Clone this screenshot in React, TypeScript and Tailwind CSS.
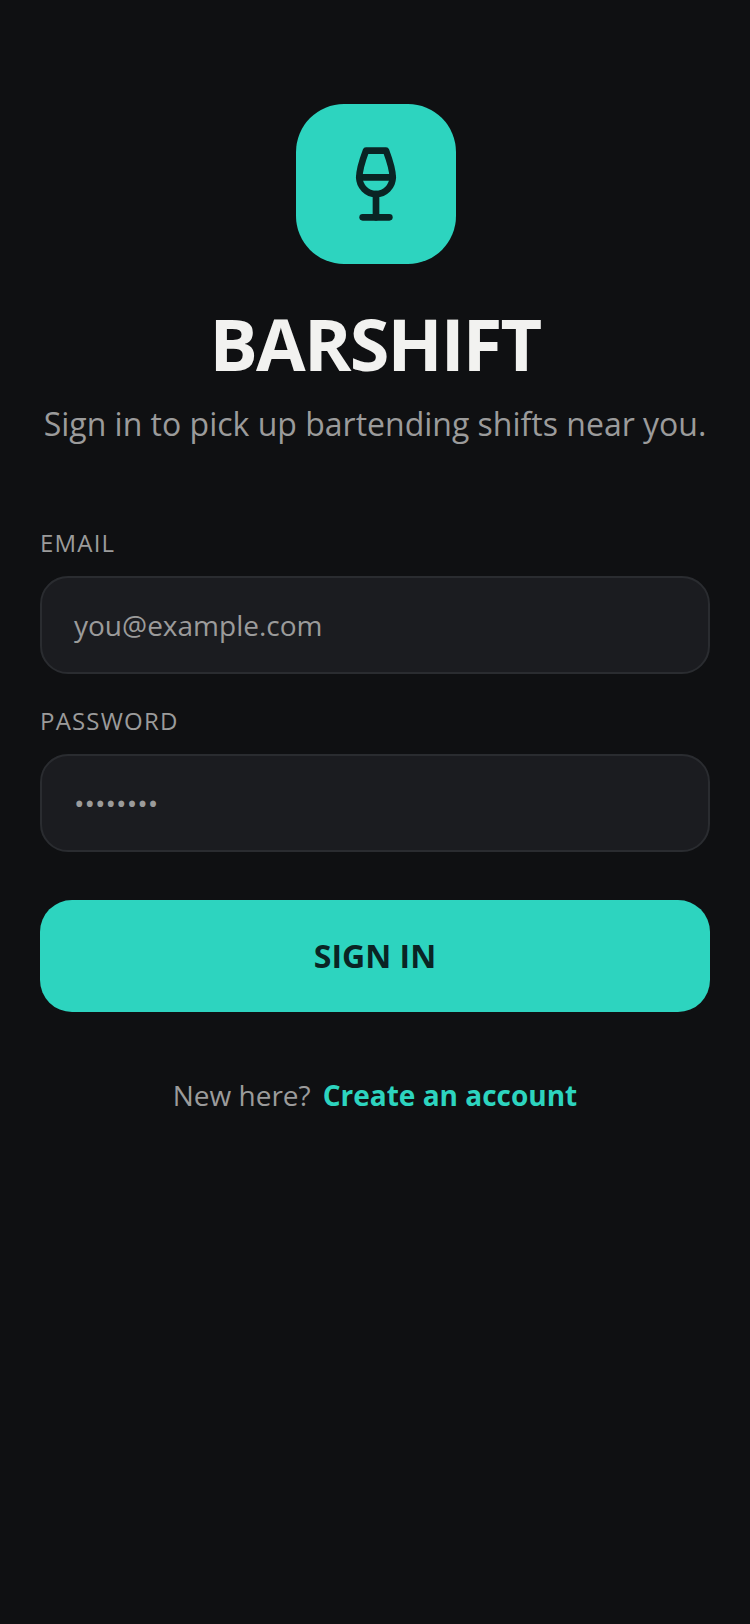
import { Wine } from 'lucide-react'

export default function App() {
  return (
    <div className="min-h-[1624px] bg-[#0f1012] px-10 pt-[104px] font-['Open_Sans',sans-serif]">
      <div className="flex flex-col items-center">
        <div className="flex h-40 w-40 translate-x-px items-center justify-center rounded-[48px] bg-[#2dd4bf]">
          <Wine size={80} strokeWidth={2} className="text-[#0a2424]" />
        </div>
        <h1 className="mt-[29px] text-[72px] leading-[100px] font-bold tracking-[-1.8px] text-[#f2f2f0]">BARSHIFT</h1>
        <p className="mt-[9px] text-[32px] leading-[44px] text-[#9b9b9b] whitespace-nowrap">Sign in to pick up bartending shifts near you.</p>
      </div>

      <div className="mt-[81px] flex flex-col">
        <label className="text-[24px] leading-[32px] tracking-[1.2px] text-[#9b9b9b]">EMAIL</label>
        <div className="mt-[17px] flex h-[98px] items-center rounded-[28px] border-2 border-[#2a2c30] bg-[#1b1c20] px-[32px] text-[28px] text-[#9b9b9b]">
          you@example.com
        </div>
        <label className="mt-[31px] text-[24px] leading-[32px] tracking-[1.2px] text-[#9b9b9b]">PASSWORD</label>
        <div className="mt-[17px] flex h-[98px] items-center rounded-[28px] border-2 border-[#2a2c30] bg-[#1b1c20] px-[32px] text-[28px] text-[#9b9b9b]">
          ••••••••
        </div>
        <button className="mt-12 h-[112px] rounded-[32px] bg-[#2dd4bf] text-[32px] font-bold text-[#0a2424]">SIGN IN</button>
      </div>

      <div className="mt-[64px] flex justify-center gap-3 text-[28px] leading-[38px]">
        <span className="text-[#9b9b9b]">New here?</span>
        <a className="font-bold text-[#2dd4bf]">Create an account</a>
      </div>
    </div>
  )
}
